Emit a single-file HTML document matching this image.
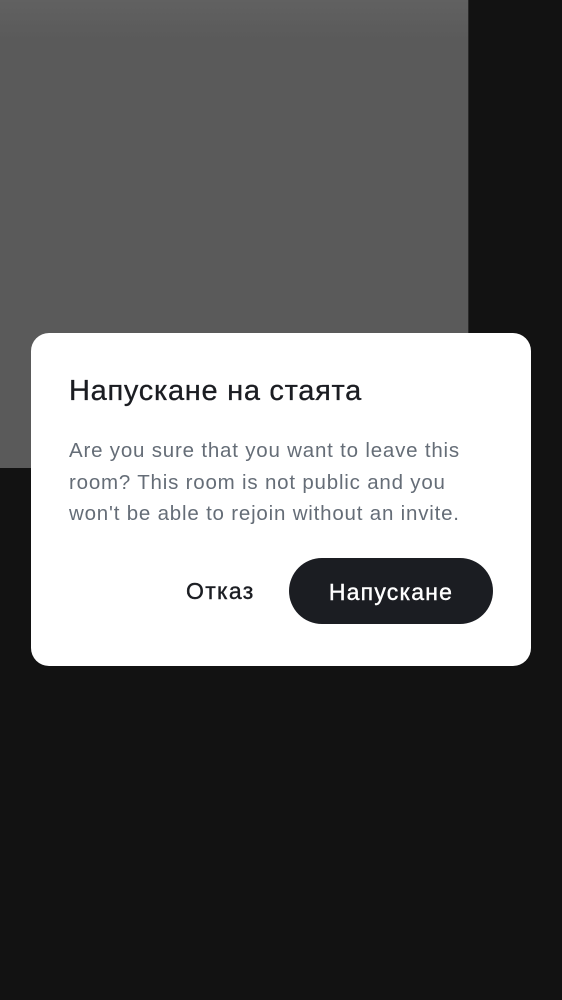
<!DOCTYPE html>
<html><head><meta charset="utf-8"><style>
html,body{margin:0;padding:0;width:562px;height:1000px;background:#121212;overflow:hidden;font-family:"Liberation Sans","DejaVu Sans",sans-serif;}
.gray{position:absolute;left:0;top:0;width:468px;height:468px;background:linear-gradient(#616161,#5a5a5a 40px,#5a5a5a);}
.edge{position:absolute;left:468px;top:0;width:1px;height:468px;background:#2a2a2a;}
.dlg{position:absolute;left:31px;top:333px;width:500px;height:333px;background:#fff;border-radius:18px;}
h1{position:absolute;left:38px;top:42px;margin:0;font-size:29px;font-weight:normal;color:#1b1d22;letter-spacing:0.7px;-webkit-text-stroke:0.3px #1b1d22;}
p{position:absolute;left:38px;top:102px;width:410px;margin:0;font-size:20.5px;line-height:31.5px;color:#656d77;letter-spacing:0.8px;}
.cancel{position:absolute;left:155px;top:245px;font-size:23px;color:#1b1d22;letter-spacing:1.3px;-webkit-text-stroke:0.4px #1b1d22;}
.btn{position:absolute;left:258px;top:225px;width:204px;height:66px;border-radius:33px;background:#1b1d22;color:#fff;font-size:23px;line-height:68px;text-align:center;letter-spacing:1.2px;-webkit-text-stroke:0.4px #fff;}
</style></head><body>
<div class="gray"></div><div class="edge"></div>
<div class="dlg">
<h1>Напускане на стаята</h1>
<p>Are you sure that you want to leave this room? This room is not public and you won't be able to rejoin without an invite.</p>
<div class="cancel">Отказ</div>
<div class="btn">Напускане</div>
</div>
</body></html>
